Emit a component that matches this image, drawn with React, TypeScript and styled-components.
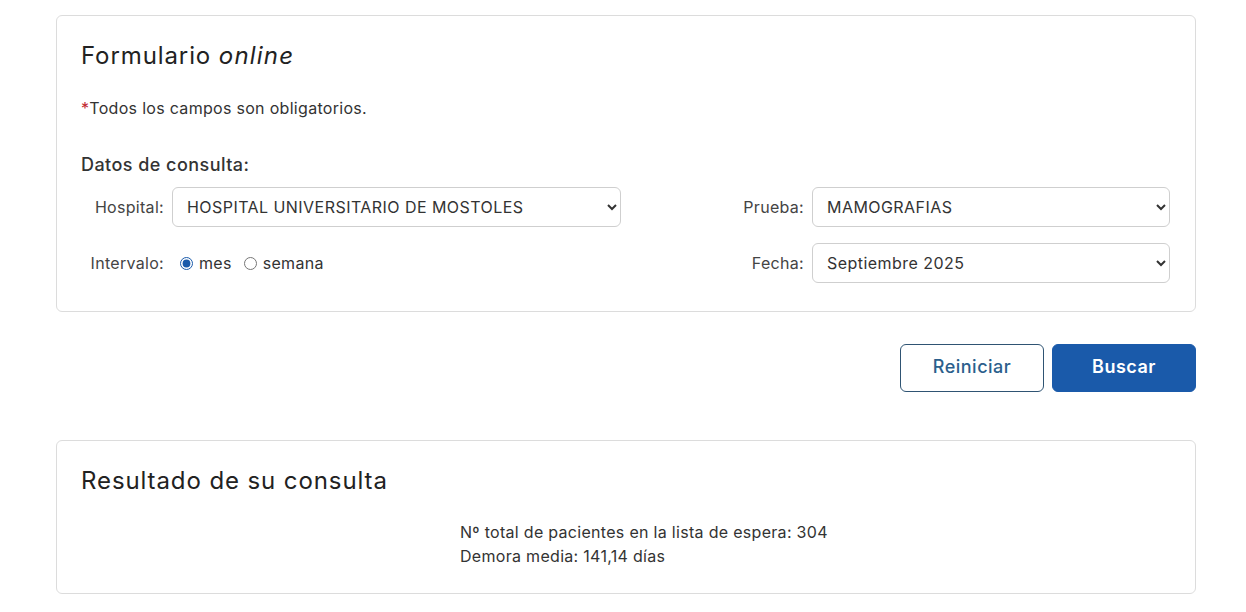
import React from "react";
import styled, { createGlobalStyle } from "styled-components";

const Global = createGlobalStyle`
  html, body { margin: 0; padding: 0; background: #fff; }
  body { font-family: Inter, "DejaVu Sans", sans-serif; color: #333; letter-spacing: 0.3px; }
  * { box-sizing: border-box; }
`;

const Page = styled.div`
  width: 1140px;
  margin: 15px 0 0 56px;
`;

const Card = styled.section`
  border: 1px solid #dcdcdc;
  border-radius: 6px;
  padding: 25px 24px 25px 24px;
  background: #fff;
`;

const Title = styled.h3`
  margin: 0;
  font-size: 24px;
  line-height: 30px;
  font-weight: 400;
  letter-spacing: 0.9px;
  color: #222;
  em { font-style: italic; letter-spacing: 1.2px; }
`;

const Note = styled.p`
  margin: 25px 0 0;
  font-size: 16px;
  line-height: 24px;
  color: #333;
`;

const Star = styled.span`
  color: #c0262d;
`;

const Sub = styled.h4`
  margin: 34px 0 0;
  font-size: 18px;
  line-height: 22px;
  font-weight: 500;
  letter-spacing: 0.45px;
  color: #333;
`;

const Grid = styled.div`
  display: grid;
  grid-template-columns: 545px 545px;
  row-gap: 16px;
  margin-top: 11px;
  margin-bottom: 3px;
`;

const Field = styled.div<{ $label: number; $select: number }>`
  display: grid;
  grid-template-columns: ${(p) => p.$label}px ${(p) => p.$select}px;
  column-gap: 8px;
  align-items: center;
  height: 40px;
`;

const Label = styled.label`
  text-align: right;
  font-size: 16px;
  color: #444;
`;

const Select = styled.select`
  height: 40px;
  width: 100%;
  border: 1px solid #cfcfcf;
  border-radius: 6px;
  background: #fff;
  padding: 0 8px 0 10px;
  font-family: inherit;
  font-size: 16px;
  letter-spacing: 0.45px;
  color: #333;
`;

const Radios = styled.div`
  display: flex;
  align-items: center;
  gap: 12px;
  font-size: 16px;
  color: #333;
`;

const RadioLabel = styled.label`
  display: inline-flex;
  align-items: center;
  gap: 6px;
  input { margin: 0; width: 13px; height: 13px; accent-color: #1a5aaa; }
  &:first-child input { margin-left: 8px; }
`;

const Actions = styled.div`
  display: flex;
  justify-content: flex-end;
  gap: 8px;
  margin: 32px 0 48px;
`;

const Button = styled.button<{ $primary?: boolean }>`
  width: 144px;
  height: 48px;
  padding: 0 0 3px;
  border-radius: 6px;
  font-family: inherit;
  font-size: 18px;
  letter-spacing: 0.5px;
  font-weight: ${(p) => (p.$primary ? 600 : 500)};
  border: 1px solid ${(p) => (p.$primary ? "#1a5aaa" : "#2f5473")};
  background: ${(p) => (p.$primary ? "#1a5aaa" : "#fff")};
  color: ${(p) => (p.$primary ? "#fff" : "#2b5f8c")};
  cursor: pointer;
`;

const Result = styled.div`
  margin: 24px 0 0 379px;
  font-size: 16px;
  line-height: 24px;
  color: #333;
`;

export default function App() {
  return (
    <>
      <Global />
      <Page>
        <Card>
          <Title>
            Formulario <em>online</em>
          </Title>
          <Note>
            <Star>*</Star>Todos los campos son obligatorios.
          </Note>
          <Sub>Datos de consulta:</Sub>
          <Grid>
            <Field $label={83} $select={449}>
              <Label>Hospital:</Label>
              <Select defaultValue="h">
                <option value="h">HOSPITAL UNIVERSITARIO DE MOSTOLES</option>
              </Select>
            </Field>
            <Field $label={178} $select={358}>
              <Label>Prueba:</Label>
              <Select defaultValue="m">
                <option value="m">MAMOGRAFIAS</option>
              </Select>
            </Field>
            <Field $label={83} $select={449}>
              <Label>Intervalo:</Label>
              <Radios>
                <RadioLabel>
                  <input type="radio" name="int" defaultChecked />
                  mes
                </RadioLabel>
                <RadioLabel>
                  <input type="radio" name="int" />
                  semana
                </RadioLabel>
              </Radios>
            </Field>
            <Field $label={178} $select={358}>
              <Label>Fecha:</Label>
              <Select defaultValue="s">
                <option value="s">Septiembre 2025</option>
              </Select>
            </Field>
          </Grid>
        </Card>
        <Actions>
          <Button>Reiniciar</Button>
          <Button $primary>Buscar</Button>
        </Actions>
        <Card>
          <Title>Resultado de su consulta</Title>
          <Result>
            Nº total de pacientes en la lista de espera: 304
            <br />
            Demora media: 141,14 días
          </Result>
        </Card>
      </Page>
    </>
  );
}
